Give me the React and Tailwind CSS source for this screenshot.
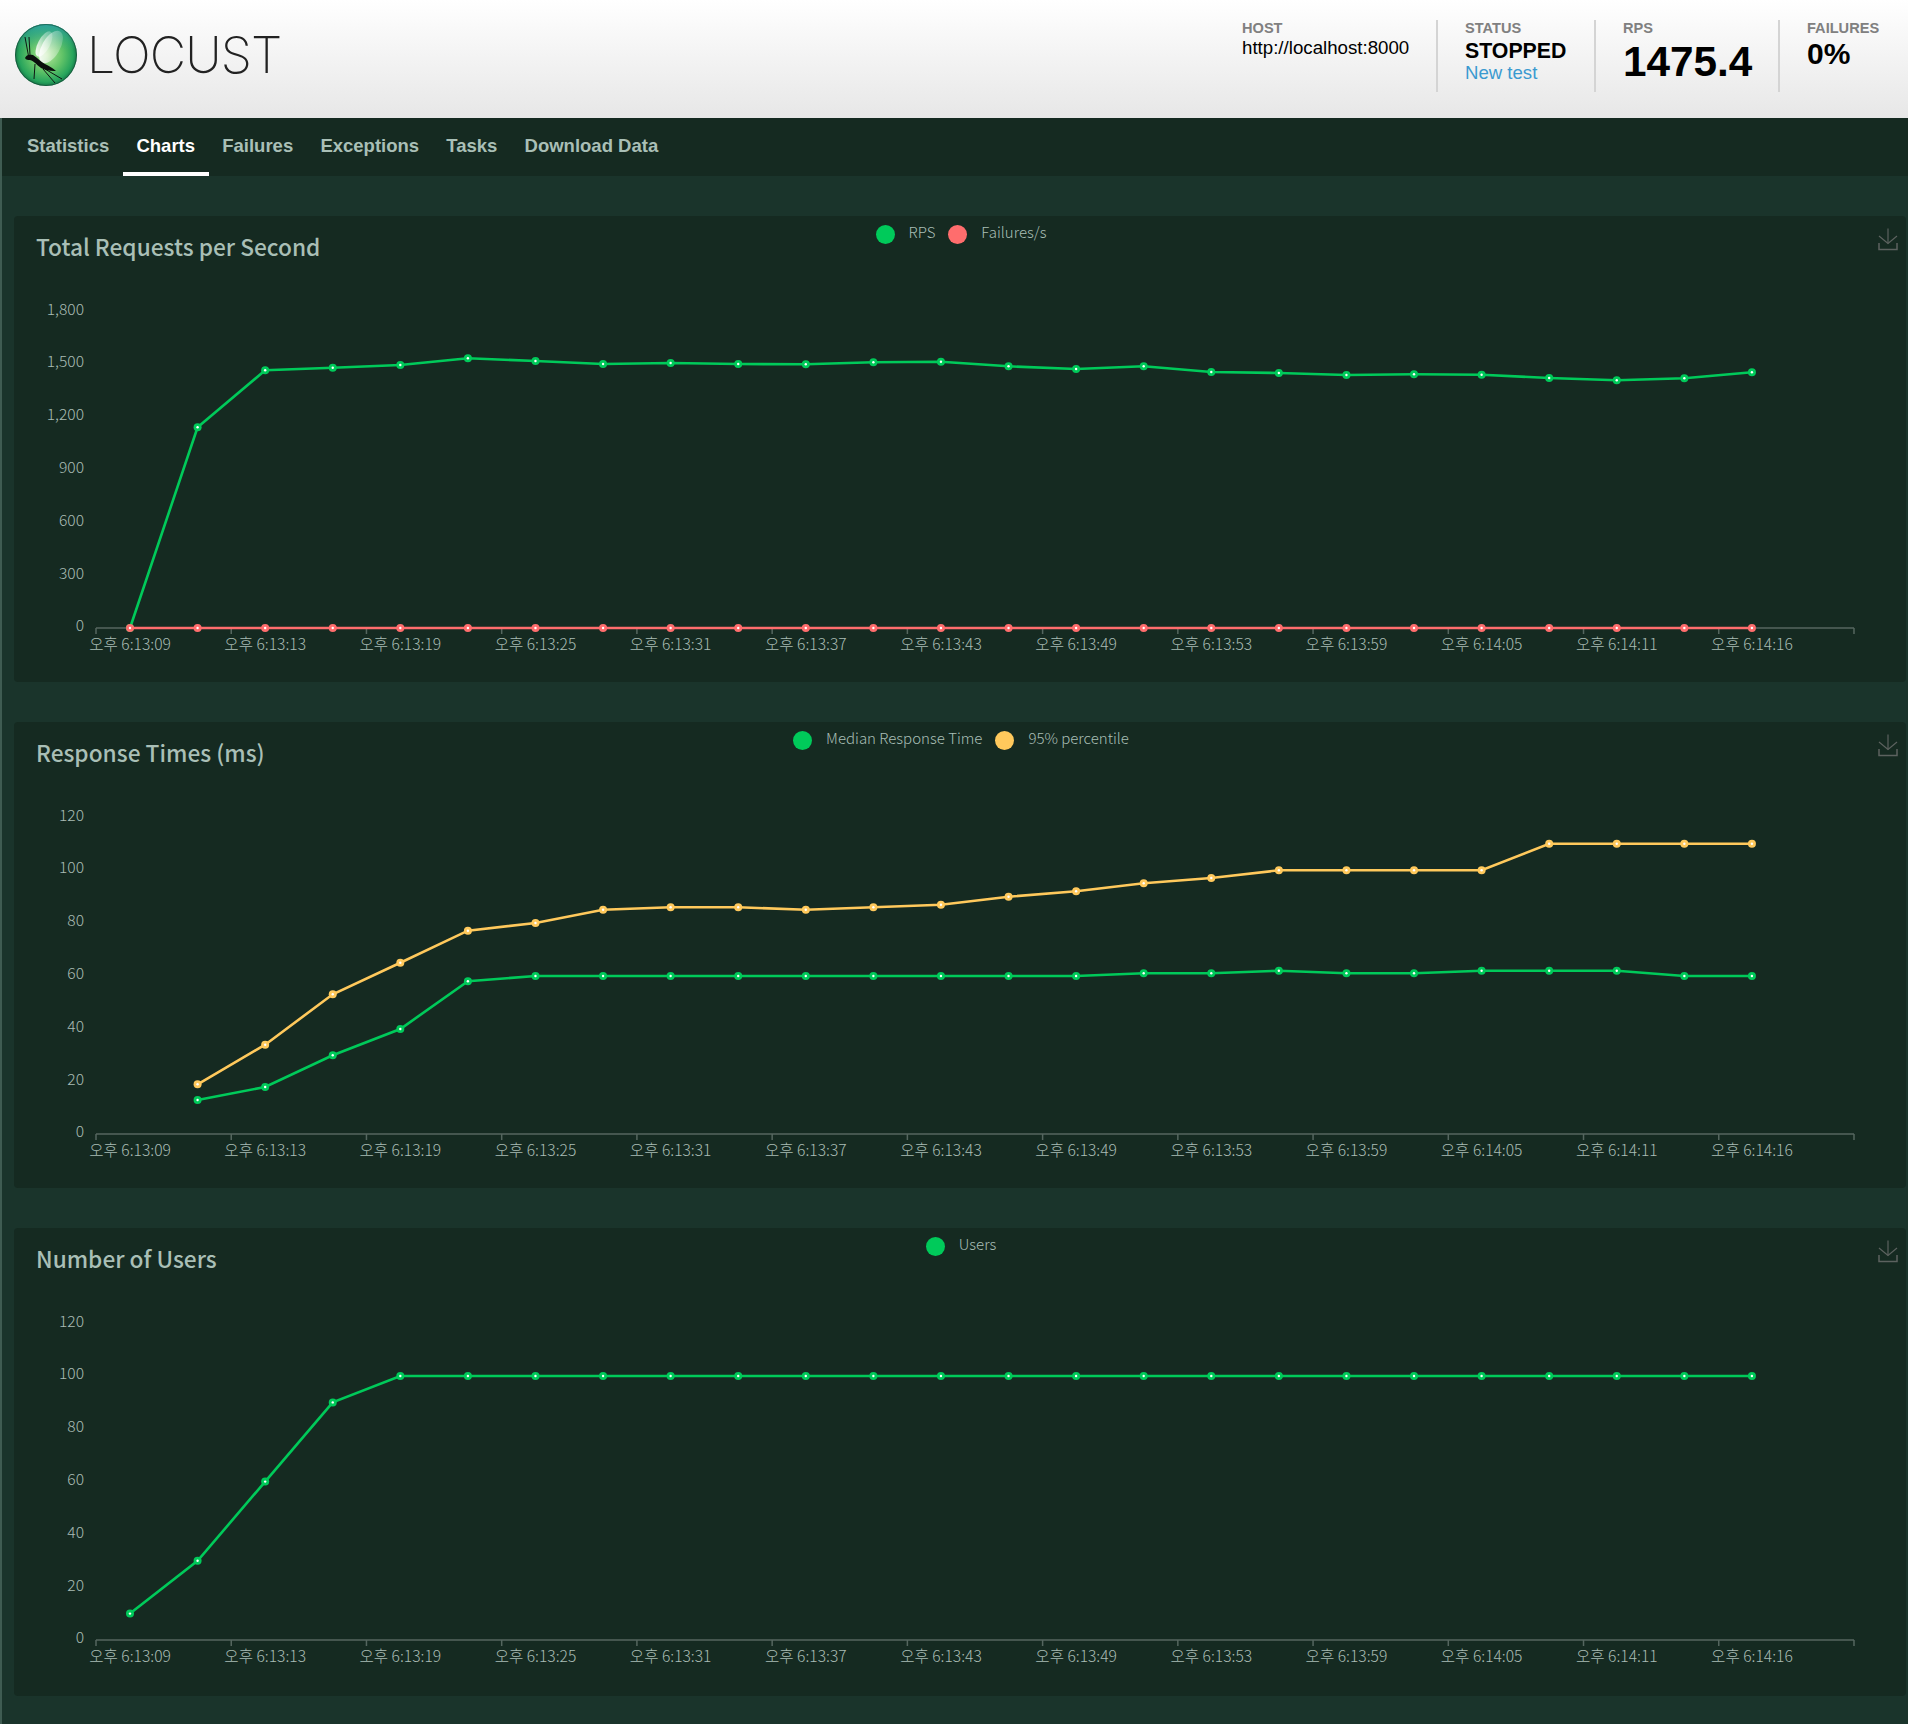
import { useId } from "react";

const GREEN = "#00ca5a";
const RED = "#ff6d6d";
const YELLOW = "#ffc95c";

const timeLabels = [
  "오후 6:13:09",
  "오후 6:13:13",
  "오후 6:13:19",
  "오후 6:13:25",
  "오후 6:13:31",
  "오후 6:13:37",
  "오후 6:13:43",
  "오후 6:13:49",
  "오후 6:13:53",
  "오후 6:13:59",
  "오후 6:14:05",
  "오후 6:14:11",
  "오후 6:14:16",
];

const pointX = (i) => 130 + 67.58 * i;

// y values are read in page pixels, shifted to the first chart's frame
const rps = [
  628, 427.3, 370.3, 367.7, 365, 358.3, 361, 364, 363, 364, 364.3, 362.3, 361.7,
  366.3, 369, 366.3, 372, 373, 375, 374.3, 374.7, 378, 380.3, 378.3, 372.3,
];
const failures = Array(25).fill(628);

const median = [
  null, 1100, 1087, 1055.3, 1029, 981.3, 976, 976, 976, 976, 976, 976, 976, 976,
  976, 973.3, 973.3, 970.7, 973.3, 973.3, 970.7, 970.7, 970.7, 976, 976,
].map((y) => (y === null ? null : y - 506));
const p95 = [
  null, 1084.3, 1044.7, 994.3, 962.7, 930.7, 923, 909.7, 907.3, 907.3, 909.7,
  907.3, 904.7, 896.7, 891.3, 883.3, 878, 870.3, 870.3, 870.3, 870.3, 843.7,
  843.7, 843.7, 843.7,
].map((y) => (y === null ? null : y - 506));

const users = [10, 30, 60, 90, ...Array(21).fill(100)].map((v) => 628 - v * 2.64);

const charts = [
  {
    title: "Total Requests per Second",
    legend: [
      { label: "RPS", color: GREEN },
      { label: "Failures/s", color: RED },
    ],
    yLabels: ["0", "300", "600", "900", "1,200", "1,500", "1,800"],
    series: [
      { color: GREEN, data: rps },
      { color: RED, data: failures },
    ],
    cardClass: "h-[466px]",
  },
  {
    title: "Response Times (ms)",
    legend: [
      { label: "Median Response Time", color: GREEN },
      { label: "95% percentile", color: YELLOW },
    ],
    yLabels: ["0", "20", "40", "60", "80", "100", "120"],
    series: [
      { color: GREEN, data: median },
      { color: YELLOW, data: p95 },
    ],
    cardClass: "h-[466px]",
  },
  {
    title: "Number of Users",
    legend: [{ label: "Users", color: GREEN }],
    yLabels: ["0", "20", "40", "60", "80", "100", "120"],
    series: [{ color: GREEN, data: users }],
    cardClass: "h-[468px]",
  },
];

const tabs = ["Statistics", "Charts", "Failures", "Exceptions", "Tasks", "Download Data"];

function Logo() {
  const id = useId();
  return (
    <svg viewBox="0 0 64 64" className="w-[64px] h-[64px] shrink-0">
      <defs>
        <radialGradient id={`${id}base`} cx="50%" cy="50%" r="52%">
          <stop offset="0%" stopColor="#b6e69a" />
          <stop offset="50%" stopColor="#63c468" />
          <stop offset="84%" stopColor="#27a45c" />
          <stop offset="100%" stopColor="#126a42" />
        </radialGradient>
        <linearGradient id={`${id}top`} x1="0" y1="0" x2="0" y2="1">
          <stop offset="0%" stopColor="#2fa5a0" stopOpacity="0.95" />
          <stop offset="42%" stopColor="#46b08a" stopOpacity="0" />
        </linearGradient>
        <linearGradient id={`${id}wing`} x1="0.15" y1="1" x2="0.8" y2="0">
          <stop offset="0%" stopColor="#ffffff" stopOpacity="1" />
          <stop offset="50%" stopColor="#ffffff" stopOpacity="0.45" />
          <stop offset="100%" stopColor="#ffffff" stopOpacity="0.15" />
        </linearGradient>
      </defs>
      <circle cx="32" cy="32" r="31" fill={`url(#${id}base)`} />
      <circle cx="32" cy="32" r="31" fill={`url(#${id}top)`} />
      <circle cx="32" cy="32" r="30.5" fill="none" stroke="#123f2f" strokeOpacity="0.55" />
      <ellipse cx="30" cy="21" rx="6" ry="14" transform="rotate(28 30 21)" fill={`url(#${id}wing)`} />
      <ellipse cx="37" cy="24" rx="9" ry="18" transform="rotate(30 37 24)" fill={`url(#${id}wing)`} />
      <path d="M11 14 L14.5 33 M15 14 L16 32" stroke="#0d1512" strokeWidth="1" fill="none" />
      <path d="M21 41 L20 56 M29 46 L41 60 M31 46 L48 56" stroke="#0d1512" strokeWidth="1" fill="none" />
      <path d="M11 35 C12 32 15 31 19 32 C24 35 27 39 31 41 C35 43 39 45 42 48 C37 48.5 31 47 27 45 C23 42 20 38 16 37 C14 37 12 37 11 35 Z" fill="#0b0f0d" />
    </svg>
  );
}

function DownloadIcon() {
  return (
    <svg viewBox="0 0 20 23" className="w-[20px] h-[23px] block" fill="none" stroke="#5c625f" strokeWidth="1.2">
      <path d="M10 0.5 V15.5" />
      <path d="M1 8 L10 15.5 L19 8" />
      <path d="M1 15 V21.5 H19 V15" strokeWidth="1.5" />
    </svg>
  );
}

function Chart({ yLabels, series }) {
  const ticks = Array.from({ length: 14 }, (_, k) => 96 + 135.23 * k);
  return (
    <svg
      viewBox="14 280 1892 402"
      className="block w-[1892px] h-[402px] text-[15.6px] font-light fill-[#a9bcb4] font-['Noto_Sans_CJK_KR','Noto_Sans',sans-serif]"
    >
      {yLabels.map((label, i) => (
        <text key={label} x="84" y={624.4 - 52.8 * i} textAnchor="end" dominantBaseline="central">
          {label}
        </text>
      ))}
      <path
        d={`M96 628 H1854 ${ticks.map((x) => `M${x} 628 V634`).join(" ")}`}
        stroke="#55665f"
        strokeWidth="1.5"
        fill="none"
      />
      {timeLabels.map((label, i) => (
        <text key={label} x={pointX(i * 2)} y="642.5" textAnchor="middle" dominantBaseline="central">
          {label}
        </text>
      ))}
      {series.map((s) => {
        const pts = s.data
          .map((y, i) => (y === null ? null : [pointX(i), y]))
          .filter(Boolean);
        return (
          <g key={s.color}>
            <polyline
              points={pts.map((p) => p.join(",")).join(" ")}
              fill="none"
              stroke={s.color}
              strokeWidth="2.6"
            />
            {pts.map(([x, y]) => (
              <g key={x}>
                <circle cx={x} cy={y} r="4" fill={s.color} />
                <circle cx={x} cy={y} r="1.2" fill="#ffffff" />
              </g>
            ))}
          </g>
        );
      })}
    </svg>
  );
}

function ChartCard({ title, legend, yLabels, series, cardClass }) {
  return (
    <section className={`${cardClass} bg-[#152a21] rounded-[4px] overflow-hidden`}>
      <div className="grid grid-cols-[1fr_auto_1fr] h-[64px]">
        <h2 className="pl-[22px] pt-[15px] text-[22.7px] leading-[32px] font-medium text-[#a9bfb6] font-['Noto_Sans_CJK_KR','Noto_Sans',sans-serif]">
          {title}
        </h2>
        <div className="flex items-start gap-[13px] pt-[9px] pl-[2px] font-['Noto_Sans_CJK_KR','Noto_Sans',sans-serif]">
          {legend.map((item) => (
            <div key={item.label} className="flex items-start gap-[14px]">
              <span
                className="w-[19px] h-[19px] rounded-full"
                style={{ backgroundColor: item.color }}
              />
              <span className="text-[15px] leading-[13px] font-light text-[#a9bfb6]">{item.label}</span>
            </div>
          ))}
        </div>
        <div className="justify-self-end mr-[8px] mt-[12px]">
          <DownloadIcon />
        </div>
      </div>
      <Chart yLabels={yLabels} series={series} />
    </section>
  );
}

function Stat({ label, children, className }) {
  return (
    <div className={`h-[72px] pl-[27px] ${className}`}>
      <div className="text-[14.6px] leading-[16px] font-bold text-[#808080]">{label}</div>
      {children}
    </div>
  );
}

export default function App() {
  return (
    <div className="min-h-[1724px] flex flex-col bg-[#1a342b] font-['Liberation_Sans',Arial,sans-serif]">
      <header className="h-[118px] bg-linear-to-b from-white to-[#e7e7e7] flex justify-between">
        <div className="flex items-start pl-[14px] pt-[23px] gap-[9px]">
          <Logo />
          <span className="text-[50px] leading-none mt-[7px] tracking-[-0.8px] font-extralight text-[#222222] font-['Inter',sans-serif]">
            LOCUST
          </span>
        </div>
        <div className="flex pt-[20px]">
          <Stat label="HOST" className="w-[223px] border-r-2 border-[#d4d4d4]">
            <div className="text-[18.7px] leading-[24px] text-black">http://localhost:8000</div>
          </Stat>
          <Stat label="STATUS" className="w-[158px] border-r-2 border-[#d4d4d4]">
            <div className="text-[21.3px] leading-[26px] mt-[2px] font-bold text-black">STOPPED</div>
            <a className="block text-[18.6px] leading-[18px] text-[#3a9ad0]">New test</a>
          </Stat>
          <Stat label="RPS" className="w-[184px] border-r-2 border-[#d4d4d4]">
            <div className="text-[42.3px] leading-[46px] mt-[3px] font-bold text-black">1475.4</div>
          </Stat>
          <Stat label="FAILURES" className="w-[128px]">
            <div className="text-[30px] leading-[34px] mt-[1px] font-bold text-black">0%</div>
          </Stat>
        </div>
      </header>
      <div className="grow border-l-2 border-[#3f5c52]">
        <nav className="h-[58px] bg-[#152a21] flex pl-[11.4px]">
          {tabs.map((tab) => (
            <div
              key={tab}
              className={`h-full px-[13.6px] pt-[2px] flex items-center text-[18.5px] font-bold border-b-4 ${
                tab === "Charts" ? "text-white border-white" : "text-[#a9bfb6] border-transparent"
              }`}
            >
              {tab}
            </div>
          ))}
        </nav>
        <main className="flex flex-col gap-[40px] pt-[40px] pl-[12px] pr-[2px]">
          {charts.map((chart) => (
            <ChartCard key={chart.title} {...chart} />
          ))}
        </main>
      </div>
    </div>
  );
}
